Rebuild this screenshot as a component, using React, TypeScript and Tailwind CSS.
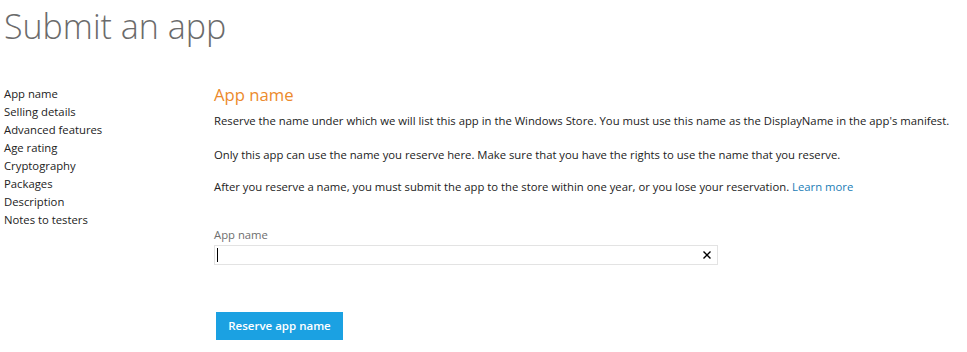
import React from "react";

const navItems = [
  "App name",
  "Selling details",
  "Advanced features",
  "Age rating",
  "Cryptography",
  "Packages",
  "Description",
  "Notes to testers",
];

export default function App() {
  return (
    <div
      className="w-[967px] h-[352px] bg-white overflow-hidden text-[#222]"
      style={{ fontFamily: '"Open Sans", "Noto Sans", sans-serif' }}
    >
      <h1 className="pl-[4px] pt-[5px] text-[34px] leading-[42px] font-light text-[#6b6b6b]">
        Submit an app
      </h1>
      <div className="flex mt-[36px]">
        <nav className="w-[214px] shrink-0 pl-[4px] pt-[2px] flex flex-col">
          {navItems.map((item) => (
            <div key={item} className="text-[11.3px] leading-[18px]">
              {item}
            </div>
          ))}
        </nav>
        <main className="flex flex-col w-[750px]">
          <h2 className="text-[16.7px] leading-[24px] text-[#ec8a2c]">App name</h2>
          <p className="mt-[6px] text-[11.3px] leading-[16px]">
            Reserve the name under which we will list this app in the Windows Store. You must use this name as the DisplayName in the app's manifest.
          </p>
          <p className="mt-[18px] text-[11.3px] leading-[16px]">
            Only this app can use the name you reserve here. Make sure that you have the rights to use the name that you reserve.
          </p>
          <p className="mt-[16px] text-[11.3px] leading-[16px]">
            After you reserve a name, you must submit the app to the store within one year, or you lose your reservation.{" "}
            <a className="text-[#1a7db6]">Learn more</a>
          </p>
          <label className="mt-[32px] text-[11.3px] leading-[16px] text-[#6e6e6e]">App name</label>
          <div className="mt-[2px] w-[504px] h-[20px] border border-[#e3e3e3] flex items-center justify-between pl-[2px] pr-[6px]">
            <span className="w-[1px] h-[14px] bg-black" />
            <svg width="8" height="8" viewBox="0 0 8 8" className="text-black">
              <path d="M0.5 0.5 L7.5 7.5 M7.5 0.5 L0.5 7.5" stroke="currentColor" strokeWidth="1.4" />
            </svg>
          </div>
          <div className="mt-[47px]">
            <button className="ml-[2px] w-[127px] h-[28px] bg-[#1ba1e2] text-white text-[11.5px] font-semibold">
              Reserve app name
            </button>
          </div>
        </main>
      </div>
    </div>
  );
}
